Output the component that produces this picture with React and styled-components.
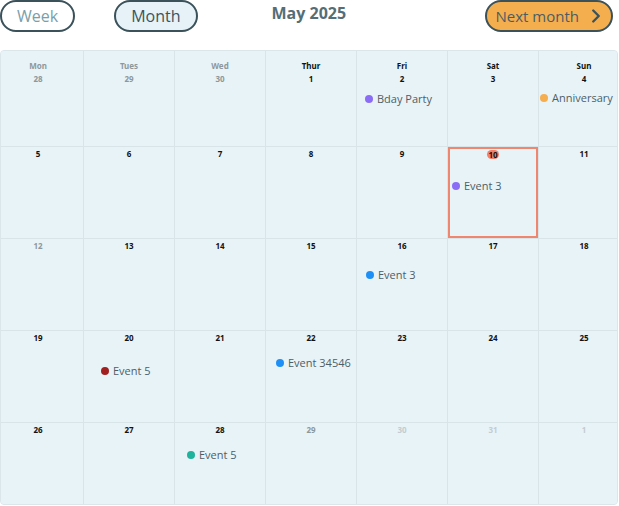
import React from "react";
import styled, { createGlobalStyle } from "styled-components";
import { ChevronRight } from "lucide-react";

const GlobalStyle = createGlobalStyle`
	html, body {
		margin: 0;
		padding: 0;
		background: #fff;
		font-family: "Open Sans", "Noto Sans", sans-serif;
	}
`;

const dayNames = ["Mon", "Tues", "Wed", "Thur", "Fri", "Sat", "Sun"];

// tone: "dim" = gray, "faint" = very light, otherwise dark
const weeks = [
	[
		{ n: 28, tone: "dim" },
		{ n: 29, tone: "dim" },
		{ n: 30, tone: "dim" },
		{ n: 1 },
		{ n: 2, events: [{ label: "Bday Party", color: "#8b6cf6", x: 8, y: 8 }] },
		{ n: 3 },
		{ n: 4, events: [{ label: "Anniversary", color: "#f5ad4e", x: 1, y: 7 }] },
	],
	[
		{ n: 5 },
		{ n: 6 },
		{ n: 7 },
		{ n: 8 },
		{ n: 9 },
		{ n: 10, today: true, events: [{ label: "Event 3", color: "#8b6cf6", x: 4, y: 20 }] },
		{ n: 11 },
	],
	[
		{ n: 12, tone: "dim" },
		{ n: 13 },
		{ n: 14 },
		{ n: 15 },
		{ n: 16, events: [{ label: "Event 3", color: "#1e90f5", x: 9, y: 17 }] },
		{ n: 17 },
		{ n: 18 },
	],
	[
		{ n: 19 },
		{ n: 20, events: [{ label: "Event 5", color: "#a11f1f", x: 17, y: 21 }] },
		{ n: 21 },
		{ n: 22, events: [{ label: "Event 34546", color: "#1e90f5", x: 10, y: 13 }] },
		{ n: 23 },
		{ n: 24 },
		{ n: 25 },
	],
	[
		{ n: 26 },
		{ n: 27 },
		{ n: 28, events: [{ label: "Event 5", color: "#1fb39e", x: 12, y: 13 }] },
		{ n: 29, tone: "dim" },
		{ n: 30, tone: "faint" },
		{ n: 31, tone: "faint" },
		{ n: 1, tone: "faint" },
	],
];

const App = () => {
	return (
		<Page>
			<GlobalStyle />
			<Toolbar>
				<PillButton>Week</PillButton>
				<PillButton $active>Month</PillButton>
				<Title>May 2025</Title>
				<NextButton>
					Next month
					<ChevronRight size={22} strokeWidth={2.6} />
				</NextButton>
			</Toolbar>

			<Board>
				<Grid>
					{weeks.map((week, wi) =>
						week.map((day, di) => (
							<Cell key={`${wi}-${di}`} $first={wi === 0} $today={day.today}>
								{wi === 0 && (
									<DayName $dim={di < 3}>{dayNames[di]}</DayName>
								)}
								{day.today ? (
									<TodayBadge>{day.n}</TodayBadge>
								) : (
									<DateNum $tone={day.tone}>{day.n}</DateNum>
								)}
								{(day.events || []).map((ev) => (
									<Event key={ev.label} $x={ev.x} $y={ev.y}>
										<Dot $color={ev.color} />
										{ev.label}
									</Event>
								))}
							</Cell>
						))
					)}
				</Grid>
			</Board>
		</Page>
	);
};

export default App;

const Page = styled.div`
	width: 619px;
	height: 506px;
	overflow: hidden;
`;

const Toolbar = styled.div`
	display: flex;
	align-items: flex-start;
	height: 50px;
	padding-top: 0;
	box-sizing: border-box;
`;

const PillButton = styled.button`
	height: 32px;
	padding: 0 15px;
	margin-right: 39px;
	border: 2px solid #3b525b;
	border-radius: 16px;
	background: ${(p) => (p.$active ? "#e6f2f7" : "#fff")};
	color: ${(p) => (p.$active ? "#3d545d" : "#7b9ea8")};
	font-family: "Open Sans", sans-serif;
	font-size: 16px;
	line-height: 28px;
	cursor: pointer;
`;

const Title = styled.h1`
	margin: 2px 0 0 35px;
	font-family: "Open Sans", sans-serif;
	font-size: 16px;
	font-weight: 700;
	line-height: 22px;
	color: #546e77;
`;

const NextButton = styled.button`
	display: flex;
	align-items: center;
	gap: 6px;
	height: 32px;
	margin-left: auto;
	margin-right: 6px;
	padding: 0 4px 0 9px;
	border: 2px solid #3b525b;
	border-radius: 16px;
	background: #f5ae4e;
	color: #4b5d63;
	font-family: "Open Sans", sans-serif;
	font-size: 15px;
	cursor: pointer;

	svg {
		color: #3b525b;
	}
`;

const Board = styled.div`
	width: 618px;
	height: 455px;
	box-sizing: border-box;
	border: 1px solid #dbe6ea;
	border-radius: 4px;
	overflow: hidden;
	background: #e8f3f8;
`;

const Grid = styled.div`
	display: grid;
	grid-template-columns: repeat(7, 91px);
	grid-template-rows: 96px repeat(4, 92px);
	margin-left: -8px;
`;

const Cell = styled.div`
	display: flex;
	flex-direction: column;
	align-items: center;
	box-sizing: border-box;
	padding-top: ${(p) => (p.$first ? "10px" : "2px")};
	border-right: 1px solid #d8e4e8;
	border-bottom: 1px solid #d8e4e8;
	background: #e8f3f8;
	box-shadow: ${(p) => (p.$today ? "inset 0 0 0 2px #ee8670" : "none")};
`;

const DayName = styled.div`
	font-family: "Noto Sans", sans-serif;
	font-size: 8px;
	line-height: 10px;
	font-weight: 700;
	margin-bottom: 3px;
	color: ${(p) => (p.$dim ? "#8d989c" : "#111")};
`;

const DateNum = styled.div`
	font-family: "Noto Sans", sans-serif;
	font-size: 8px;
	line-height: 10px;
	font-weight: 700;
	color: ${(p) =>
		p.$tone === "dim" ? "#8d989c" : p.$tone === "faint" ? "#c3ccd0" : "#111"};
`;

const TodayBadge = styled.div`
	min-width: 12px;
	height: 9px;
	margin-top: 1px;
	border-radius: 5px;
	background: #f0806a;
	color: #111;
	font-family: "Noto Sans", sans-serif;
	font-size: 8px;
	line-height: 9px;
	font-weight: 700;
	text-align: center;
`;

const Event = styled.div`
	display: flex;
	align-items: center;
	gap: 4px;
	align-self: flex-start;
	margin: ${(p) => `${p.$y}px 0 0 ${p.$x}px`};
	font-family: "Open Sans", sans-serif;
	font-size: 11px;
	line-height: 14px;
	color: #4e5e65;
	white-space: nowrap;
`;

const Dot = styled.span`
	flex: none;
	width: 8px;
	height: 8px;
	border-radius: 50%;
	background: ${(p) => p.$color};
`;
